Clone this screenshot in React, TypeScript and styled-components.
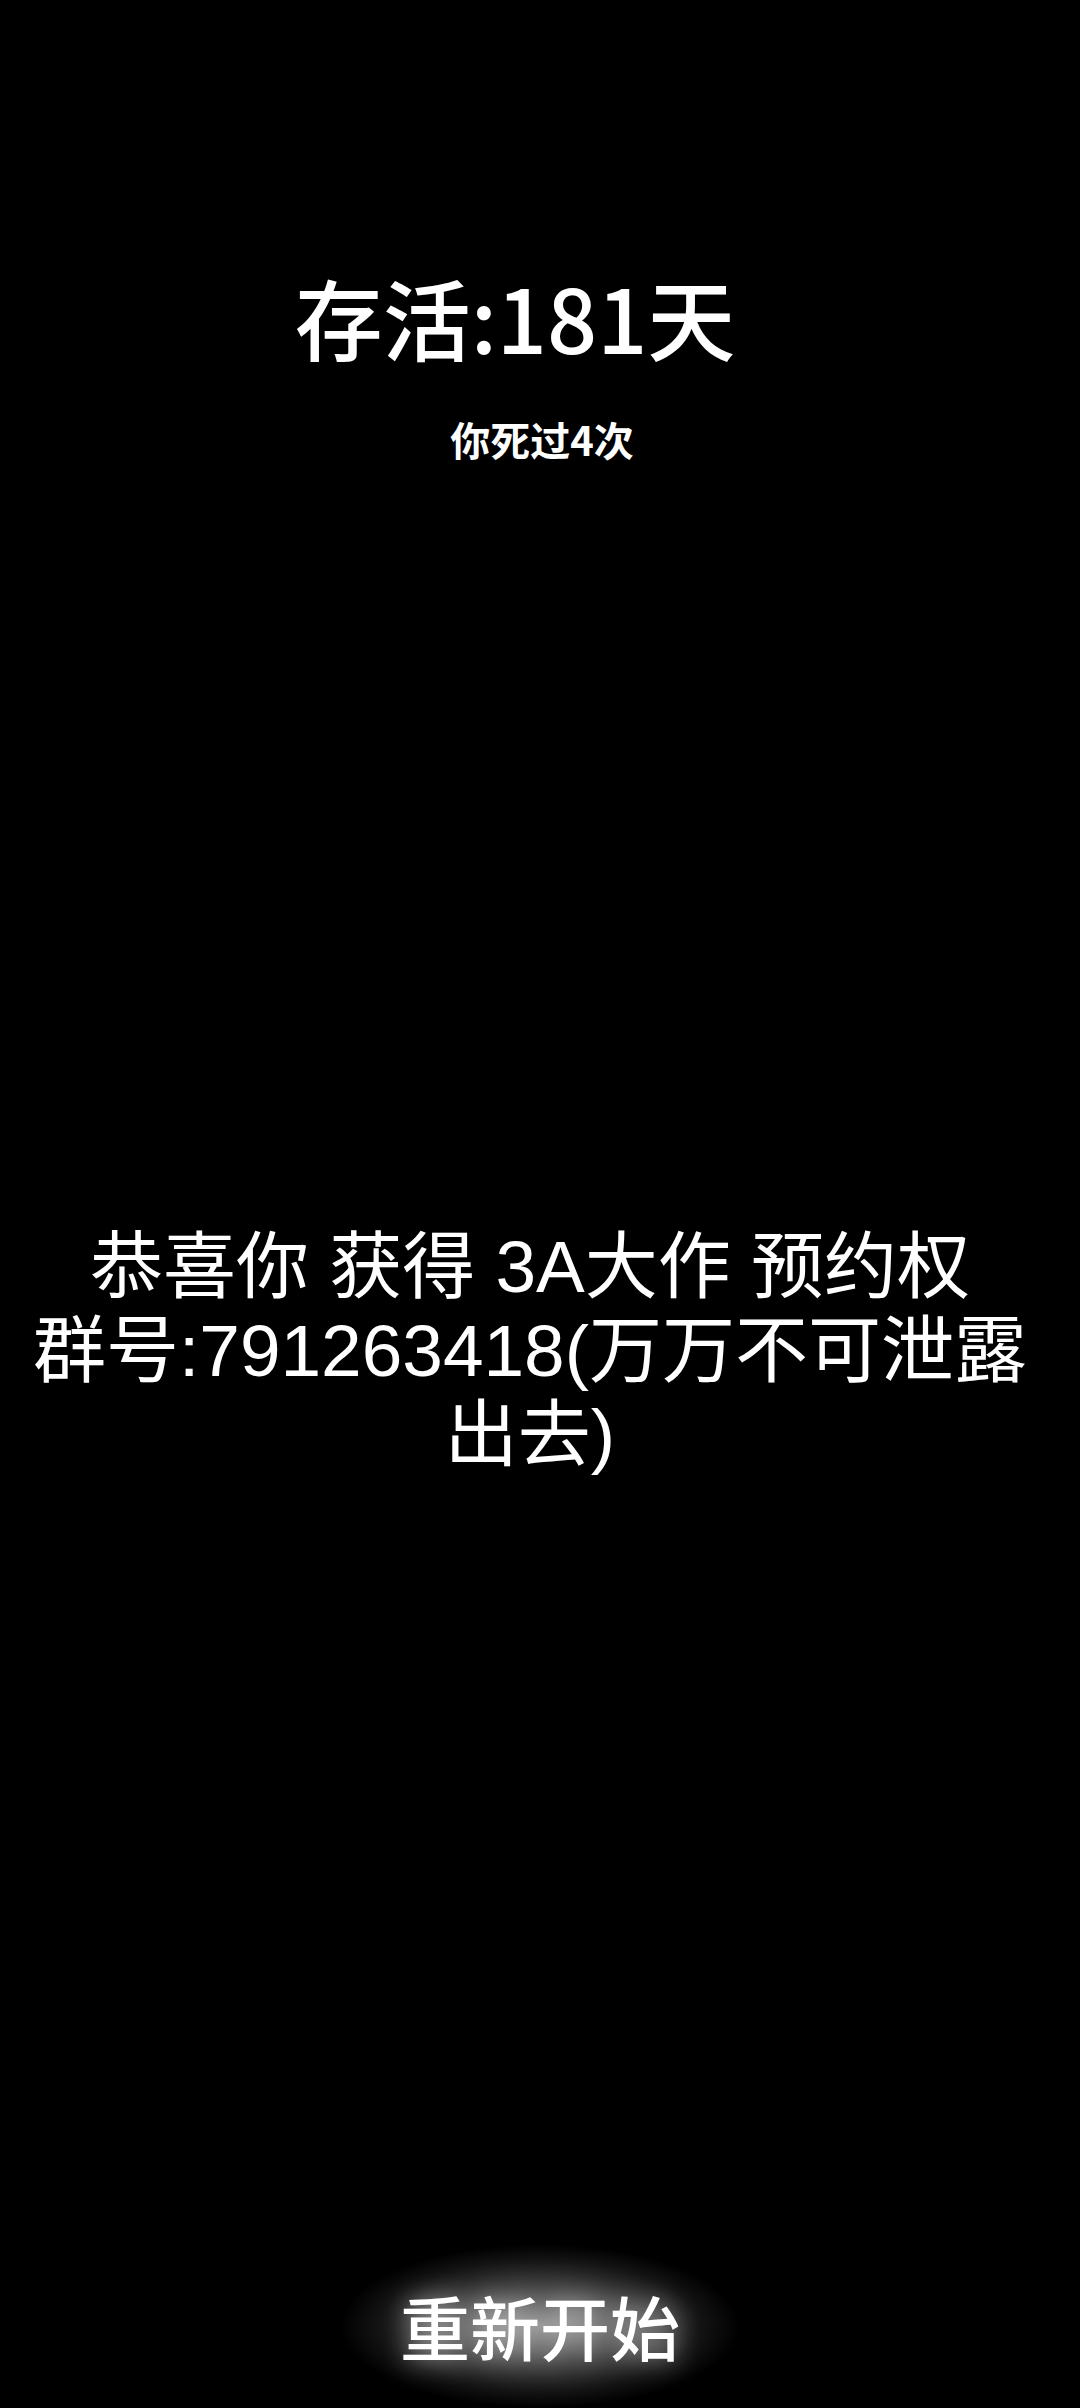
import React from "react";
import styled, { createGlobalStyle } from "styled-components";

const GlobalStyle = createGlobalStyle`
  html, body {
    margin: 0;
    padding: 0;
    background: #000;
  }
  * {
    box-sizing: border-box;
  }
`;

export default function App() {
  return (
    <>
      <GlobalStyle />
      <Screen>
        <Header>
          <Title>存活:181天</Title>
          <Deaths>你死过4次</Deaths>
        </Header>
        <Message>
          恭喜你 获得 3A大作 预约权
          <br />
          群号:791263418(万万不可泄露出去)
        </Message>
        <Footer>
          <RestartButton>重新开始</RestartButton>
        </Footer>
      </Screen>
    </>
  );
}

const Screen = styled.div`
  width: 1080px;
  height: 2408px;
  background: #000;
  color: #fff;
  display: flex;
  flex-direction: column;
  overflow: hidden;
`;

const Header = styled.div`
  display: flex;
  flex-direction: column;
  align-items: center;
  padding-top: 263px;
`;

const Title = styled.div`
  font-family: "Noto Sans CJK SC", sans-serif;
  font-size: 88px;
  font-weight: 500;
  line-height: 1.2;
  margin-right: 50px;
`;

const Deaths = styled.div`
  font-family: "Noto Sans CJK SC", sans-serif;
  font-size: 40px;
  font-weight: 700;
  line-height: 1.2;
  margin-top: 46px;
  margin-left: 4px;
`;

const Message = styled.div`
  margin-top: 762px;
  width: 1060px;
  text-align: center;
  font-family: "Liberation Sans", "Noto Sans CJK SC", sans-serif;
  font-size: 73px;
  line-height: 84px;
`;

const Footer = styled.div`
  margin-top: auto;
  display: flex;
  justify-content: center;
`;

const RestartButton = styled.button`
  border: none;
  width: 400px;
  padding: 40px 0;
  color: #fff;
  font-family: "Noto Sans CJK SC", sans-serif;
  font-size: 70px;
  font-weight: 500;
  line-height: 1.2;
  cursor: pointer;
  text-shadow: 0 0 24px rgba(255, 255, 255, 0.55);
  background: radial-gradient(
    ellipse closest-side,
    rgba(255, 255, 255, 0.55) 0%,
    rgba(255, 255, 255, 0.28) 45%,
    rgba(255, 255, 255, 0.08) 80%,
    rgba(255, 255, 255, 0) 100%
  );
`;
